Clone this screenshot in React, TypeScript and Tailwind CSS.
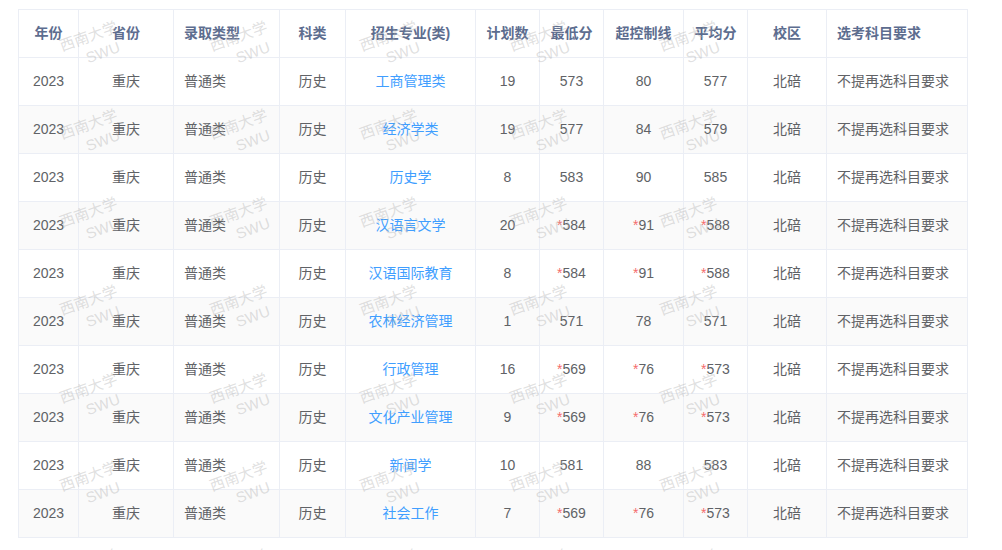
const cols = [60, 95, 106, 66, 130, 64, 64, 80, 64, 79, 141];
const heads = ["年份", "省份", "录取类型", "科类", "招生专业(类)", "计划数", "最低分", "超控制线", "平均分", "校区", "选考科目要求"];
const rows: [string, string, string, string, string, string][] = [
  ["工商管理类", "19", "573", "80", "577", ""],
  ["经济学类", "19", "577", "84", "579", ""],
  ["历史学", "8", "583", "90", "585", ""],
  ["汉语言文学", "20", "*584", "*91", "*588", ""],
  ["汉语国际教育", "8", "*584", "*91", "*588", ""],
  ["农林经济管理", "1", "571", "78", "571", ""],
  ["行政管理", "16", "*569", "*76", "*573", ""],
  ["文化产业管理", "9", "*569", "*76", "*573", ""],
  ["新闻学", "10", "581", "88", "583", ""],
  ["社会工作", "7", "*569", "*76", "*573", ""],
];

function Score({ v }: { v: string }) {
  if (v.startsWith("*")) return <span><span className="text-[#f56c6c]">*</span>{v.slice(1)}</span>;
  return <span>{v}</span>;
}

export default function App() {
  const marks = [];
  for (let r = 0; r < 7; r++)
    for (let c = 0; c < 5; c++)
      marks.push(
        <div key={`${r}-${c}`} className="absolute -rotate-[20deg] text-center text-[15px] leading-[20px] text-[#b0b0b0]/40"
          style={{ left: 62 + c * 150, top: 26 + r * 88 + (c % 2) * 0 }}>
          <div>西南大学</div>
          <div className="pl-4">SWU</div>
        </div>
      );
  return (
    <div className="relative h-[550px] w-[1002px] overflow-hidden bg-white pl-[18px] pt-[9px]" style={{ fontFamily: '"Liberation Sans", "Noto Sans CJK SC", sans-serif' }}>
      <table className="border-collapse text-[14px] text-[#606266]" style={{ tableLayout: "fixed" }}>
        <colgroup>{cols.map((w, i) => <col key={i} style={{ width: w }} />)}</colgroup>
        <thead>
          <tr className="h-[48px]">
            {heads.map((h, i) => (
              <th key={i} className={`border border-[#ebeef5] font-bold text-[#5d6d8f] ${i === 2 || i === 10 ? "pl-[10px] text-left" : "text-center"}`}>{h}</th>
            ))}
          </tr>
        </thead>
        <tbody>
          {rows.map((r, i) => (
            <tr key={i} className={`h-[48px] ${i % 2 ? "bg-[#fafafa]" : ""}`}>
              <td className="border border-[#ebeef5] text-center">2023</td>
              <td className="border border-[#ebeef5] text-center">重庆</td>
              <td className="border border-[#ebeef5] pl-[10px]">普通类</td>
              <td className="border border-[#ebeef5] text-center">历史</td>
              <td className="border border-[#ebeef5] text-center text-[#409eff]">{r[0]}</td>
              <td className="border border-[#ebeef5] text-center">{r[1]}</td>
              <td className="border border-[#ebeef5] text-center"><Score v={r[2]} /></td>
              <td className="border border-[#ebeef5] text-center"><Score v={r[3]} /></td>
              <td className="border border-[#ebeef5] text-center"><Score v={r[4]} /></td>
              <td className="border border-[#ebeef5] text-center">北碚</td>
              <td className="border border-[#ebeef5] pl-[10px]">不提再选科目要求</td>
            </tr>
          ))}
        </tbody>
      </table>
      <div className="pointer-events-none absolute inset-0">{marks}</div>
    </div>
  );
}
